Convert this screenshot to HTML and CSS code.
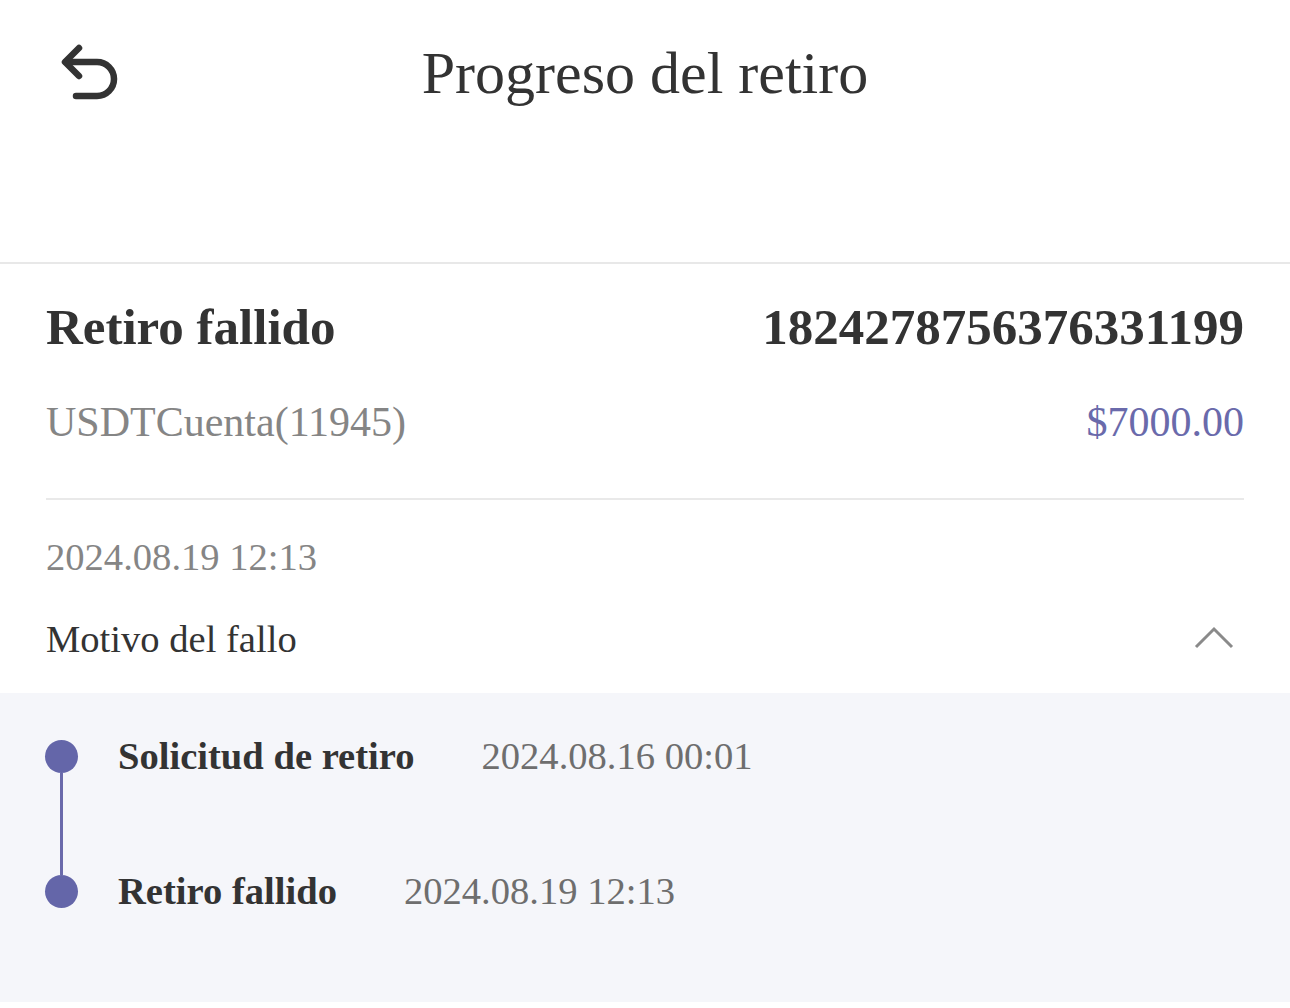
FILE: index.html
```html
<!DOCTYPE html>
<html lang="es">
<head>
<meta charset="utf-8">
<title>Progreso del retiro</title>
<link rel="stylesheet" href="styles.css">
</head>
<body>
<header class="topbar">
  <div class="topbar-row">
    <div class="back">
      <svg class="back-icon" width="60" height="60" viewBox="0 0 60 60" aria-hidden="true">
        <path d="M19 5 L5 19 L19 33" fill="none" stroke="#333" stroke-width="6.5" stroke-linecap="round" stroke-linejoin="round"/>
        <path d="M6 19 H37 A17 17 0 0 1 37 53 H16" fill="none" stroke="#333" stroke-width="6.5" stroke-linecap="round" stroke-linejoin="round"/>
      </svg>
    </div>
    <h1 class="title">Progreso del retiro</h1>
    <div></div>
  </div>
</header>

<section class="summary">
  <div class="row row-head">
    <span class="status">Retiro fallido</span>
    <span class="order">1824278756376331199</span>
  </div>
  <div class="row row-sub">
    <span class="account">USDTCuenta(11945)</span>
    <span class="amount">$7000.00</span>
  </div>
  <div class="divider"></div>
  <div class="date">2024.08.19 12:13</div>
  <div class="row row-reason">
    <span class="reason">Motivo del fallo</span>
    <svg class="chevron" width="40" height="24" viewBox="0 0 40 24" aria-hidden="true">
      <polyline points="2,21 20,3 38,21" fill="none" stroke="#8a8a8a" stroke-width="3"/>
    </svg>
  </div>
</section>

<section class="timeline">
  <div class="step">
    <div class="marker">
      <span class="dot"></span>
      <span class="line"></span>
    </div>
    <div class="step-text">
      <span class="step-label">Solicitud de retiro</span>
      <span class="step-date">2024.08.16 00:01</span>
    </div>
  </div>
  <div class="step">
    <div class="marker">
      <span class="dot"></span>
    </div>
    <div class="step-text">
      <span class="step-label">Retiro fallido</span>
      <span class="step-date">2024.08.19 12:13</span>
    </div>
  </div>
</section>
</body>
</html>
```
FILE: styles.css
```css
* { box-sizing: border-box; }

html, body {
  margin: 0;
  padding: 0;
  background: #ffffff;
}

body {
  font-family: "Liberation Serif", "Times New Roman", serif;
  color: #333333;
  width: 1290px;
}

.topbar {
  height: 264px;
  border-bottom: 2px solid #e8e8e8;
  padding-top: 43px;
}

.topbar-row {
  display: grid;
  grid-template-columns: 1fr auto 1fr;
  align-items: start;
}

.back {
  padding-left: 60px;
}

.back-icon { display: block; }

.title {
  margin: 0;
  font-size: 60px;
  line-height: 60px;
  font-weight: normal;
  color: #333333;
}

.summary {
  padding: 23px 46px 29px 46px;
}

.row {
  display: flex;
  justify-content: space-between;
  align-items: center;
}

.row-head {
  height: 80px;
  line-height: 80px;
  font-size: 51px;
  font-weight: bold;
  color: #333333;
}

.row-sub {
  margin-top: 25px;
  height: 60px;
  line-height: 60px;
  font-size: 42px;
}

.account { color: #858585; }
.amount { color: #6a6aab; }

.divider {
  margin-top: 46px;
  height: 2px;
  background: #e9e9e9;
}

.date {
  margin-top: 32px;
  height: 50px;
  line-height: 50px;
  font-size: 38.6px;
  color: #858585;
}

.row-reason {
  margin-top: 32px;
  height: 50px;
  line-height: 50px;
  font-size: 38.6px;
  color: #333333;
}

.chevron {
  display: block;
  margin-right: 10px;
  margin-top: -2px;
}

.timeline {
  background: #f5f6fa;
  height: 309px;
  padding: 47px 45px 0 45px;
}

.step {
  display: flex;
  align-items: flex-start;
}

.marker {
  width: 33px;
  display: flex;
  flex-direction: column;
  align-items: center;
}

.dot {
  width: 33px;
  height: 33px;
  border-radius: 50%;
  background: #6466a9;
}

.line {
  width: 3px;
  height: 102px;
  background: #6a6aab;
}

.step-text {
  display: flex;
  margin-left: 40px;
  height: 33px;
  line-height: 33px;
  font-size: 38.6px;
}

.step-label {
  font-weight: bold;
  color: #333333;
}

.step-date {
  margin-left: 67px;
  color: #6e6e6e;
}
```
